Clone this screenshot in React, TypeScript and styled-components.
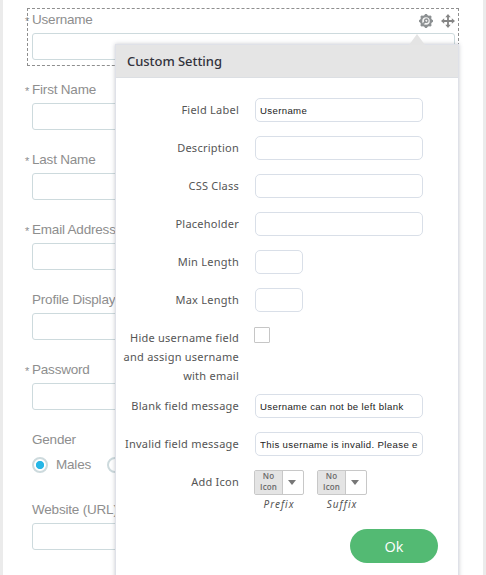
import React from "react";
import styled, { createGlobalStyle } from "styled-components";

const GlobalStyle = createGlobalStyle`
  * { box-sizing: border-box; }
  body { margin: 0; background: #fff; overflow: hidden; }
`;

const Page = styled.main`
  position: relative;
  height: 575px;
  overflow: hidden;
  border-left: 3px solid #ebebeb;
  border-right: 3px solid #ebebeb;
  background: #fff;
  padding: 8px 24px 0;
  font-family: "Liberation Sans", Arial, sans-serif;
`;

const Field = styled.section<{ $active?: boolean }>`
  position: relative;
  width: 432px;
  height: 58px;
  margin-bottom: 12px;
  padding: 3px 3px 0 4px;
  border: 1px ${(p) => (p.$active ? "dashed #8f8f8f" : "solid transparent")};
`;

const FieldLabel = styled.label`
  display: block;
  height: 16px;
  font-size: 13.5px;
  letter-spacing: -0.2px;
  line-height: 15px;
  color: #8e8e8e;
  white-space: nowrap;
`;

const Required = styled.span`
  position: absolute;
  left: -3px;
  top: 5px;
  font-size: 11px;
`;

const FieldInput = styled.input`
  display: block;
  width: 100%;
  height: 27px;
  margin: 5px 0 0;
  border: 1px solid #cddadd;
  border-radius: 3px;
  background: #fff;
`;

const Tools = styled.div`
  position: absolute;
  right: 3px;
  top: 5px;
  display: flex;
  gap: 8px;
  svg { display: block; }
`;

const RadioRow = styled.div`
  display: flex;
  align-items: center;
  margin-top: 8px;
  height: 17px;
  font-size: 13.5px;
  letter-spacing: -0.2px;
  color: #8e8e8e;
`;

const Radio = styled.span<{ $on?: boolean }>`
  width: 16px;
  height: 16px;
  flex: none;
  border: 2px solid #cddadd;
  border-radius: 50%;
  background: ${(p) => (p.$on ? "radial-gradient(circle, #27b6e6 3.7px, #fff 4.5px)" : "#fff")};
`;

const RadioText = styled.span`
  width: 51px;
  padding-left: 8px;
  margin-right: 8px;
`;

const Dialog = styled.div`
  position: absolute;
  left: 112px;
  top: 44px;
  width: 344px;
  height: 560px;
  background: #fff;
  border: 1px solid #dfe1e8;
  box-shadow: 0 0 4px rgba(60, 65, 85, 0.28);
  font-family: "Noto Sans", sans-serif;
  color: #555;
`;

const Pointer = styled.span`
  position: absolute;
  left: 293px;
  top: -11px;
  border: 8px solid transparent;
  border-top: 0;
  border-bottom: 11px solid #e4e4e4;
`;

const DialogHeader = styled.h2`
  height: 33px;
  margin: 0;
  padding-left: 11px;
  background: #e5e5e5;
  border-bottom: 1px solid #dcdfe3;
  font-family: "Noto Sans", sans-serif;
  font-size: 13px;
  font-weight: 500;
  letter-spacing: -0.05px;
  line-height: 33px;
  color: #32323c;
`;

const Rows = styled.div`
  display: grid;
  gap: 14px;
  padding: 20px 0 0;
`;

const Row = styled.div<{ $height?: number }>`
  display: grid;
  grid-template-columns: 123px 168px;
  column-gap: 16px;
  height: ${(p) => p.$height ?? 24}px;
`;

const RowLabel = styled.label`
  font-size: 11px;
  line-height: 19px;
  padding-top: 2px;
  text-align: right;
  letter-spacing: 0.24px;
  white-space: pre-line;
`;

const TextInput = styled.input<{ $small?: boolean }>`
  width: ${(p) => (p.$small ? 48 : 168)}px;
  height: 24px;
  padding: 0 4px;
  border: 1px solid #d9dfe8;
  border-radius: 5px;
  background: #fff;
  font-family: "Liberation Sans", Arial, sans-serif;
  font-size: 9.6px;
  letter-spacing: 0.36px;
  color: #222;
`;

const Checkbox = styled.span`
  width: 16px;
  height: 16px;
  margin: 1px 0 0 -1px;
  border: 1px solid #c6c6c6;
  border-radius: 1px;
`;

const Pickers = styled.div`
  display: flex;
  gap: 13px;
  margin-left: -1px;
`;

const Picker = styled.div`
  width: 50px;
`;

const PickerBox = styled.div`
  display: flex;
  height: 25px;
  border: 1px solid #c8c8c8;
  border-radius: 2px;
`;

const PickerValue = styled.span`
  width: 28px;
  height: 23px;
  border-right: 1px solid #c8c8c8;
  background: #e4e4e4;
  font: 600 8px/11px "Open Sans", sans-serif;
  letter-spacing: 0.1px;
  text-align: center;
  color: #696969;
`;

const PickerLines = styled.span`
  display: block;
  margin-top: -1px;
`;

const Arrow = styled.span`
  align-self: center;
  margin-left: 5px;
  border: 4px solid transparent;
  border-top: 5px solid #777;
  border-bottom: 0;
`;

const Caption = styled.div`
  text-align: center;
  font-size: 10px;
  font-style: italic;
  line-height: 14px;
  letter-spacing: 1px;
  padding-top: 2px;
`;

const OkButton = styled.button`
  display: block;
  width: 88px;
  height: 34px;
  margin: 35px 0 0 234px;
  padding: 0;
  border: 0;
  border-radius: 17px;
  background: #53ba73;
  color: #fff;
  font: 14.5px "Open Sans", sans-serif;
`;

const gearPoints = Array.from({ length: 32 }, (_, i) => {
  const angle = ((i - 0.5) * Math.PI) / 16;
  const r = i % 4 < 2 ? 7.2 : 5.9;
  return `${7 + Math.sin(angle) * r},${7 - Math.cos(angle) * r}`;
}).join(" ");

const GearIcon = () => (
  <svg width="14" height="14" viewBox="0 0 14 14">
    <polygon points={gearPoints} fill="#8c9092" />
    <circle cx="7" cy="7" r="3.8" fill="#f4f4f4" />
    <path d="M4.2 9.8L6.6 7.4" fill="none" stroke="#8c9092" strokeWidth="1.6" />
    <circle cx="7.3" cy="6.7" r="1.7" fill="none" stroke="#8c9092" strokeWidth="1.3" />
  </svg>
);

const MoveIcon = () => (
  <svg width="14" height="14" viewBox="0 0 14 14">
    <path d="M7 2v10M2 7h10" stroke="#858585" strokeWidth="1.8" />
    <path d="M7 0l2.7 3.2H4.3zM7 14l2.7-3.2H4.3zM0 7l3.2-2.7v5.4zM14 7l-3.2-2.7v5.4z" fill="#858585" />
  </svg>
);

const fields = [
  { label: "Username", required: true, active: true },
  { label: "First Name", required: true },
  { label: "Last Name", required: true },
  { label: "Email Address", required: true },
  { label: "Profile Display Name" },
  { label: "Password", required: true },
  { label: "Gender", radio: true },
  { label: "Website (URL)" },
  { label: "Country/Region" },
];

const settings = [
  { label: "Field Label", value: "Username" },
  { label: "Description", value: "" },
  { label: "CSS Class", value: "" },
  { label: "Placeholder", value: "" },
  { label: "Min Length", value: "", small: true },
  { label: "Max Length", value: "", small: true },
];

const messages = [
  { label: "Blank field message", value: "Username can not be left blank" },
  { label: "Invalid field message", value: "This username is invalid. Please enter a valid username." },
];

const Setting = ({ label, value, small }: { label: string; value: string; small?: boolean }) => (
  <Row>
    <RowLabel>{label}</RowLabel>
    <TextInput defaultValue={value} $small={small} />
  </Row>
);

export default function App() {
  return (
    <Page>
      <GlobalStyle />
      {fields.map((f) => (
        <Field key={f.label} $active={f.active}>
          <FieldLabel>
            {f.required && <Required>*</Required>}
            {f.label}
          </FieldLabel>
          {f.radio ? (
            <RadioRow>
              <Radio $on />
              <RadioText>Males</RadioText>
              <Radio />
              <RadioText>Female</RadioText>
            </RadioRow>
          ) : (
            <FieldInput />
          )}
          {f.active && (
            <Tools>
              <GearIcon />
              <MoveIcon />
            </Tools>
          )}
        </Field>
      ))}
      <Dialog>
        <Pointer />
        <DialogHeader>Custom Setting</DialogHeader>
        <Rows>
          {settings.map((s) => (
            <Setting key={s.label} {...s} />
          ))}
          <Row $height={54}>
            <RowLabel>{"Hide username field\nand assign username\nwith email"}</RowLabel>
            <Checkbox />
          </Row>
          {messages.map((s) => (
            <Setting key={s.label} {...s} />
          ))}
          <Row>
            <RowLabel>Add Icon</RowLabel>
            <Pickers>
              {["Prefix", "Suffix"].map((name) => (
                <Picker key={name}>
                  <PickerBox>
                    <PickerValue>
                      <PickerLines>No<br />Icon</PickerLines>
                    </PickerValue>
                    <Arrow />
                  </PickerBox>
                  <Caption>{name}</Caption>
                </Picker>
              ))}
            </Pickers>
          </Row>
        </Rows>
        <OkButton>Ok</OkButton>
      </Dialog>
    </Page>
  );
}
